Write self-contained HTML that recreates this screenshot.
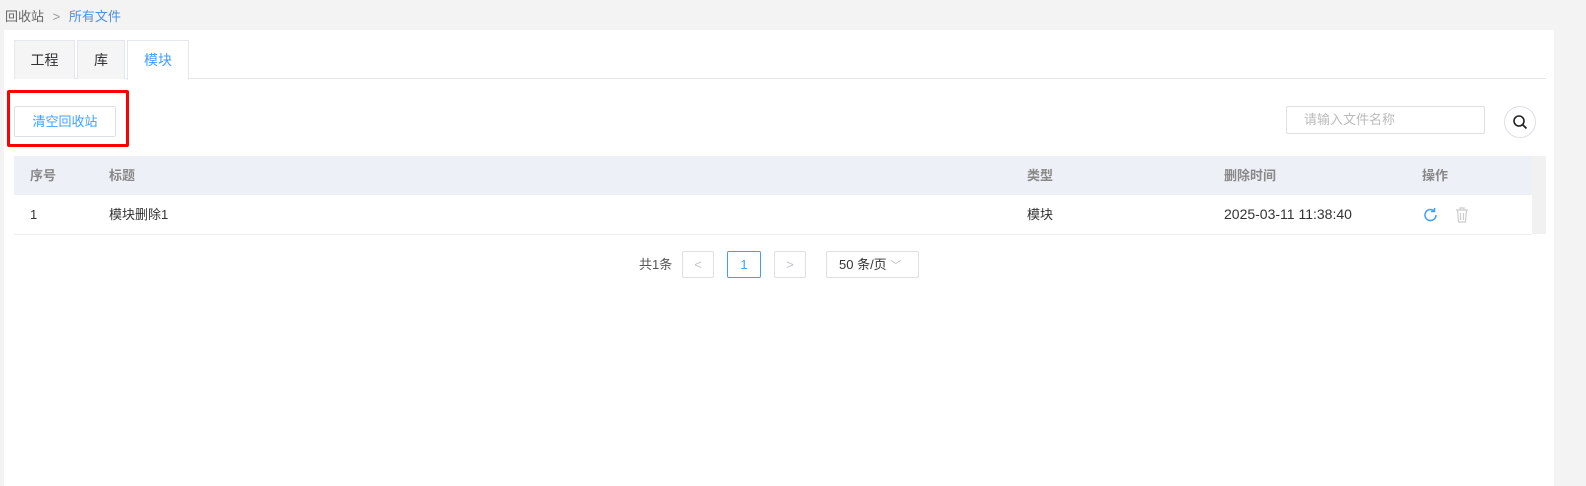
<!DOCTYPE html>
<html><head><meta charset="utf-8"><style>
*{margin:0;padding:0;box-sizing:border-box}
body{width:1586px;height:486px;background:#f3f3f3;font-family:"Liberation Sans","Noto Sans CJK SC",sans-serif;font-size:13px;color:#333;position:relative;overflow:hidden}
.a{position:absolute}
.panel{left:4px;top:30px;width:1550px;height:456px;background:#fff}
.tab{top:40px;height:39px;border:1px solid #e4e7ed;border-bottom:none;background:#f5f5f5;line-height:38px;text-align:center;font-size:14px;color:#303133}
.hd{color:#888;font-weight:bold;font-size:13px;top:156px;height:39px;line-height:39px}
.cell{top:195px;height:39px;line-height:39px;font-size:13px;color:#333}
.pg{top:251px;height:27px;border:1px solid #dcdfe6;border-radius:2px;text-align:center;line-height:25px;color:#c0c4cc}
</style></head><body>
<div class="a" style="left:5px;top:6px;color:#666">回收站 <span style="color:#999;margin:0 5px">&gt;</span> <span style="color:#4a90e2">所有文件</span></div>
<div class="a panel"></div>
<div class="a" style="left:14px;top:78px;width:1532px;height:1px;background:#e4e7ed"></div>
<div class="a tab" style="left:14px;width:61px">工程</div>
<div class="a tab" style="left:77px;width:48px">库</div>
<div class="a tab" style="left:127px;width:62px;background:#fff;color:#409eff;height:40px">模块</div>
<div class="a" style="left:7px;top:90px;width:122px;height:57px;border:3px solid #f00;border-radius:2px"></div>
<div class="a" style="left:14px;top:106px;width:102px;height:31px;border:1px solid #dcdfe6;border-radius:2px;color:#409eff;text-align:center;line-height:29px">清空回收站</div>
<div class="a" style="left:1286px;top:106px;width:199px;height:28px;border:1px solid #dcdfe6;border-radius:2px;color:#bbb;line-height:26px;padding-left:17px">请输入文件名称</div>
<div class="a" style="left:1504px;top:106px;width:32px;height:32px;border:1px solid #dcdfe6;border-radius:50%"><svg width="30" height="30" viewBox="0 0 30 30"><circle cx="14" cy="14" r="5" fill="none" stroke="#222" stroke-width="1.6"/><path d="M17.5 17.5l4 4" stroke="#222" stroke-width="1.8"/></svg></div>
<div class="a" style="left:14px;top:156px;width:1518px;height:39px;background:#eef0f8"></div>
<div class="a" style="left:1532px;top:156px;width:14px;height:78px;background:#f1f1f1"></div>
<div class="a" style="left:14px;top:234px;width:1518px;height:1px;background:#ebeef5"></div>
<div class="a hd" style="left:30px">序号</div><div class="a hd" style="left:109px">标题</div><div class="a hd" style="left:1027px">类型</div><div class="a hd" style="left:1224px">删除时间</div><div class="a hd" style="left:1422px">操作</div>
<div class="a cell" style="left:30px">1</div><div class="a cell" style="left:109px">模块删除1</div><div class="a cell" style="left:1027px">模块</div><div class="a cell" style="left:1224px;font-size:14px">2025-03-11 11:38:40</div>
<svg class="a" style="left:1422px;top:206px" width="18" height="18" viewBox="0 0 18 18"><path d="M14 9a5.5 5.5 0 1 1-2-4.2" fill="none" stroke="#409eff" stroke-width="1.5"/><path d="M12.5 2v3.5H9" fill="none" stroke="#409eff" stroke-width="1.5"/></svg>
<svg class="a" style="left:1454px;top:206px" width="16" height="18" viewBox="0 0 16 18"><path d="M2 4h12M6 4V2h4v2M3.5 4l1 12h7l1-12M6.5 7v7M9.5 7v7" fill="none" stroke="#ccc" stroke-width="1.2"/></svg>
<div class="a" style="left:639px;top:251px;line-height:27px;color:#555">共1条</div>
<div class="a pg" style="left:682px;width:32px">&lt;</div>
<div class="a pg" style="left:727px;width:34px;border-color:#409eff;color:#409eff">1</div>
<div class="a pg" style="left:774px;width:32px">&gt;</div>
<div class="a pg" style="left:826px;width:93px;color:#333;text-align:left;padding-left:12px">50 条/页 <span style="color:#bbb;font-size:11px">﹀</span></div>
</body></html>
